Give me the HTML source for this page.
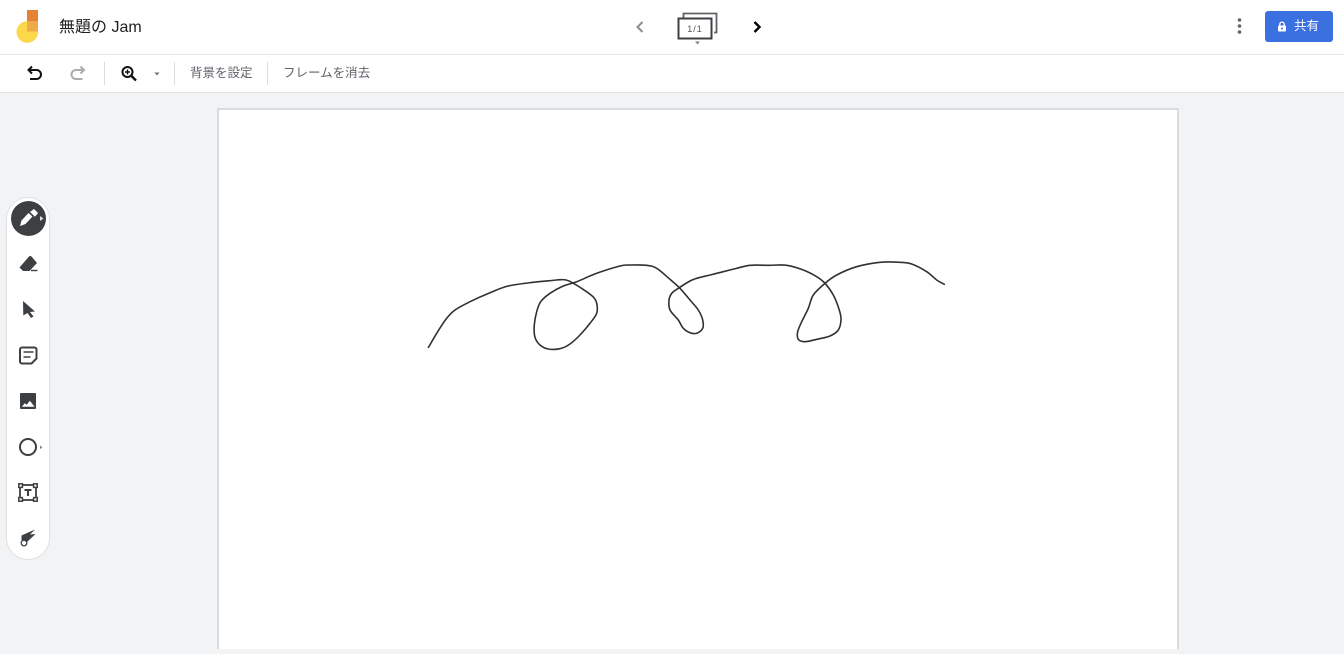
<!DOCTYPE html>
<html lang="ja">
<head>
<meta charset="utf-8">
<title>無題の Jam</title>
<style>
html,body{margin:0;padding:0;width:1344px;height:654px;overflow:hidden;background:#f1f3f4;font-family:"Liberation Sans","Noto Sans CJK JP",sans-serif;}
.abs{position:absolute;}
#top{left:0;top:0;width:1344px;height:54px;background:#fff;border-bottom:1px solid #e4e5e7;}
#bar{left:0;top:55px;width:1344px;height:37px;background:#fff;border-bottom:1px solid #e2e3e5;}
.sep{width:1px;height:23px;top:62px;background:#dadce0;}
.t{white-space:nowrap;color:#5f6368;font-size:12.500px;line-height:16px;}
#canvas{left:217px;top:108px;width:958px;height:539px;background:#fff;border:2px solid #d9dbde;border-bottom:0;}
#rail{left:6px;top:197px;width:42px;height:361px;background:#fff;border:1px solid #dfe1e5;border-radius:22px;}
#btn{left:1265px;top:11px;width:68px;height:31px;background:#3b70e0;border-radius:3px;}
</style>
</head>
<body>
<div class="abs" id="canvas"></div>
<div class="abs" id="top"></div>
<div class="abs" id="bar"></div>

<svg class="abs" style="left:0;top:0" width="60" height="54" viewBox="0 0 60 54">
  <rect x="27" y="10" width="11" height="21" fill="#e58233"/>
  <circle cx="27.300" cy="32" r="10.800" fill="#fbd84a"/>
  <path d="M27 21h11v10.500H27z" fill="#eeab4a"/>
</svg>
<div class="abs" style="left:59px;top:17px;font-size:16px;line-height:22px;color:#202124;white-space:nowrap">無題の Jam</div>

<svg class="abs" style="left:630px;top:15px" width="20" height="24" viewBox="0 0 20 24"><path d="M12.500 7 7.500 12l5 5" fill="none" stroke="#8a8d91" stroke-width="2"/></svg>
<svg class="abs" style="left:676px;top:10px" width="46" height="38" viewBox="0 0 46 38">
  <path d="M7.500 8V3.500H40.500V22.500H38" fill="none" stroke="#5f6368" stroke-width="1.800"/>
  <rect x="2.500" y="8.500" width="33" height="20" fill="#fff" stroke="#3c4043" stroke-width="2"/>
  <path d="M19 31.500h5l-2.500 3z" fill="#80868b"/>
  <text x="19" y="22" font-size="9" letter-spacing="1" text-anchor="middle" fill="#555" font-family="Liberation Sans">1/1</text>
</svg>
<svg class="abs" style="left:747px;top:15px" width="20" height="24" viewBox="0 0 20 24"><path d="M7.500 7 12.500 12l-5 5" fill="none" stroke="#000" stroke-width="2.400"/></svg>

<svg class="abs" style="left:1231px;top:17px" width="16" height="18" viewBox="0 0 16 18"><circle cx="8.500" cy="3" r="1.800" fill="#5f6368"/><circle cx="8.500" cy="9" r="1.800" fill="#5f6368"/><circle cx="8.500" cy="15" r="1.800" fill="#5f6368"/></svg>
<div class="abs" id="btn"></div>
<svg class="abs" style="left:1276px;top:20px" width="12" height="13" viewBox="0 0 12 13"><path d="M3.800 6V4.300a2.200 2.200 0 0 1 4.400 0V6" fill="none" stroke="#fff" stroke-width="1.300"/><rect x="2" y="5.500" width="8" height="6" rx="1" fill="#fff"/><circle cx="6" cy="8.500" r="1" fill="#3b70e0"/></svg>
<div class="abs" style="left:1294px;top:17px;font-size:12.500px;line-height:18px;color:#fff;white-space:nowrap">共有</div>

<svg class="abs" style="left:25px;top:63px" width="22" height="20" viewBox="0 0 22 20"><path d="M7 3.500 3.500 7 7 10.500M4 7h7.500a4.500 4.500 0 0 1 0 9H5" fill="none" stroke="#111" stroke-width="2"/></svg>
<svg class="abs" style="left:66px;top:63px" width="22" height="20" viewBox="0 0 22 20"><path d="M14.500 3.500 18 7l-3.500 3.500M17.500 7H10a4.500 4.500 0 0 0 0 9h6.500" fill="none" stroke="#aaadb0" stroke-width="2"/></svg>
<div class="abs sep" style="left:104px"></div>
<svg class="abs" style="left:119px;top:63px" width="20" height="20" viewBox="0 0 20 20"><circle cx="8.500" cy="9" r="5" fill="none" stroke="#111" stroke-width="2"/><path d="M12 12.500 17 17.500" stroke="#111" stroke-width="2.400"/><path d="M6 9h5M8.500 6.500v5" stroke="#111" stroke-width="1.400"/></svg>
<svg class="abs" style="left:153px;top:71px" width="8" height="6" viewBox="0 0 8 6"><path d="M1.500 1.500h5L4 4.500z" fill="#6b6e72"/></svg>
<div class="abs sep" style="left:174px"></div>
<div class="abs t" style="left:190px;top:65px;">背景を設定</div>
<div class="abs sep" style="left:267px"></div>
<div class="abs t" style="left:283px;top:65px;">フレームを消去</div>

<svg class="abs" style="left:0;top:0;pointer-events:none" width="1344" height="654" viewBox="0 0 1344 654">
<path id="ink" fill="none" stroke="#2f3133" stroke-width="1.600" stroke-linejoin="round" stroke-linecap="round" d=""/>
</svg>
<script>
(function(){
var s="428.5,347.3 436.7,333.3 446.7,318.3 455,310 470,301.7 490,292.7 508.3,286 533.3,282.3 552,280.5 560,279.7 568.3,280.7 583,289.3 593,296.7 596.7,303.3 596.7,313.3 590,323.3 580,335 570,344 560,348.7 548.3,349 540,345 535,337.3 534.3,325 536.7,311.7 540.7,301.7 550,293.3 563.3,286 576.7,281.7 596.7,273.3 620,266 630,265 646.7,265.3 656.7,268.3 670,279.3 680,288.3 690,300 698.3,310 702.7,320 702.7,328.3 696.7,333.3 690,332.7 683.3,328.3 678.3,320 670,310 669,300 672,293 678.3,288.3 690,281 696.7,278.3 710,275 723.3,271.7 736,268.500 750,265.300 768,265.300 786.7,265.3 803.3,270 816.7,276.7 825,283.3 833.3,295 839.3,310 841,320 838.3,330 830,336 816.7,339.3 805,341.7 798.3,339.3 797.7,331.7 801.7,321.7 808.3,308.3 813.3,295 825,283.3 836.7,275 856.7,266.7 880,262.3 900,262.3 911.7,264 926.7,271.7 936.7,280 944.3,284.3";
var p=s.split(" ").map(function(a){return a.split(",").map(Number);});
var d="M"+p[0][0]+" "+p[0][1];
for(var i=0;i<p.length-1;i++){
var a=p[Math.max(i-1,0)],b=p[i],c=p[i+1],e=p[Math.min(i+2,p.length-1)];
d+=" C"+(b[0]+(c[0]-a[0])/6).toFixed(1)+" "+(b[1]+(c[1]-a[1])/6).toFixed(1)+" "+(c[0]-(e[0]-b[0])/6).toFixed(1)+" "+(c[1]-(e[1]-b[1])/6).toFixed(1)+" "+c[0]+" "+c[1];
}
document.getElementById("ink").setAttribute("d",d);
})();
</script>

<div class="abs" id="rail"></div>
<svg class="abs" style="left:6px;top:197px" width="44" height="362" viewBox="0 0 44 362">
  <!-- pen -->
  <circle cx="22.500" cy="21.500" r="17.500" fill="#3c4043"/>
  <path d="M34 19l3.500 2.500-3.500 2.500z" fill="#dadce0"/>
  <path d="M14 29l1.500-5.500 7-7.500 4 3.500-7 7.500z" fill="#fff"/>
  <path d="M24 15l4-3 4 4-3 3.800z" fill="#fff"/>
  <!-- eraser -->
  <path d="M13.500 70.500 23 59.500q1-1 2.500 0L31 66l-7.500 8H17z" fill="#3c4043"/>
  <path d="M25 73.500h6.500" stroke="#3c4043" stroke-width="1.400"/>
  <!-- arrow -->
  <path d="M17 104 29 114.500l-5 .5 3.500 4.500-2.500 1.500-3.500-5-4.200 2.500z" fill="#3c4043"/>
  <!-- note -->
  <path d="M16 150.500h12.500a2 2 0 0 1 2 2v9l-5 5H16a2 2 0 0 1-2-2v-12a2 2 0 0 1 2-2z" fill="none" stroke="#3c4043" stroke-width="2" stroke-linejoin="round"/>
  <path d="M17.500 155h10M17.500 160h7" stroke="#3c4043" stroke-width="1.500"/>
  <!-- image -->
  <rect x="14" y="196" width="16" height="16" rx="1" fill="#3c4043"/>
  <path d="M15.800 209.800l3-3.500 2 1.500 3-4 2 2.500 2.800 3.500z" fill="#fff"/>
  <!-- circle -->
  <circle cx="22" cy="250" r="8" fill="none" stroke="#3c4043" stroke-width="2"/>
  <path d="M34 248.500l2.500 1.800-2.500 1.800z" fill="#80868b"/>
  <!-- text -->
  <rect x="14" y="288" width="16" height="15" fill="none" stroke="#3c4043" stroke-width="1.800"/>
  <rect x="12.800" y="286.800" width="3.600" height="3.600" fill="#fff" stroke="#3c4043" stroke-width="1.500"/>
  <rect x="27.600" y="286.800" width="3.600" height="3.600" fill="#fff" stroke="#3c4043" stroke-width="1.500"/>
  <rect x="12.800" y="300.600" width="3.600" height="3.600" fill="#fff" stroke="#3c4043" stroke-width="1.500"/>
  <rect x="27.600" y="300.600" width="3.600" height="3.600" fill="#fff" stroke="#3c4043" stroke-width="1.500"/>
  <path d="M18.500 293h7M22 293v6" fill="none" stroke="#3c4043" stroke-width="2"/>
  <!-- laser -->
  <path d="M15.500 338.500 29 332.500l-5 5 5.500-.5L20.500 345.500 15.500 343z" fill="#3c4043"/>
  <circle cx="18" cy="346" r="2.800" fill="#fff" stroke="#3c4043" stroke-width="1.300"/>
</svg>
</body>
</html>
